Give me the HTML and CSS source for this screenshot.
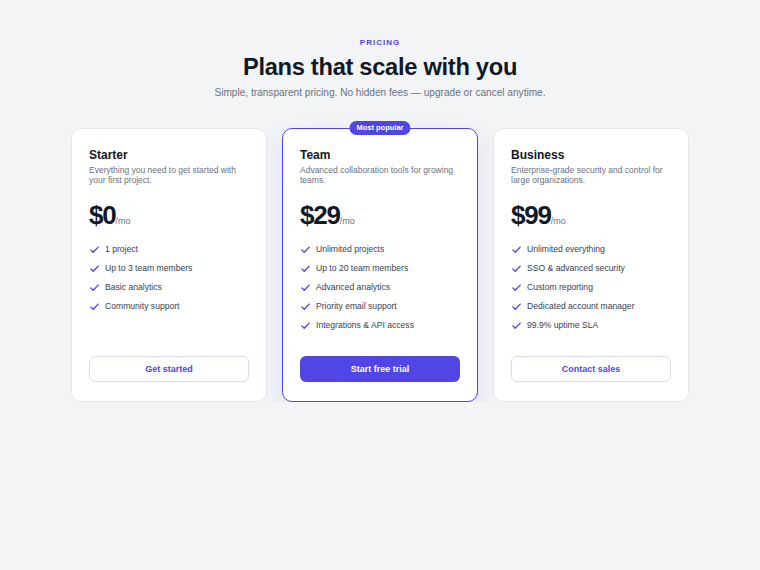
FILE: index.html
```html
<!DOCTYPE html>
<html lang="en">
<head>
<meta charset="utf-8">
<title>Pricing</title>
<link rel="stylesheet" href="styles.css">
</head>
<body>
<main class="pricing">
  <header class="pricing-head">
    <p class="eyebrow">Pricing</p>
    <h1 class="headline">Plans that scale with you</h1>
    <p class="lede">Simple, transparent pricing. No hidden fees — upgrade or cancel anytime.</p>
  </header>

  <section class="plans">
    <article class="plan">
      <h2 class="plan-name">Starter</h2>
      <p class="plan-desc">Everything you need to get started with your first project.</p>
      <p class="plan-price"><span class="amount">$0</span><span class="period">/mo</span></p>
      <ul class="features">
        <li><svg class="check" viewBox="0 0 12 12"><path d="M2 6.4 4.6 9 10 3.4"/></svg>1 project</li>
        <li><svg class="check" viewBox="0 0 12 12"><path d="M2 6.4 4.6 9 10 3.4"/></svg>Up to 3 team members</li>
        <li><svg class="check" viewBox="0 0 12 12"><path d="M2 6.4 4.6 9 10 3.4"/></svg>Basic analytics</li>
        <li><svg class="check" viewBox="0 0 12 12"><path d="M2 6.4 4.6 9 10 3.4"/></svg>Community support</li>
      </ul>
      <a class="btn btn-outline" href="#">Get started</a>
    </article>

    <article class="plan plan-featured">
      <span class="badge">Most popular</span>
      <h2 class="plan-name">Team</h2>
      <p class="plan-desc">Advanced collaboration tools for growing teams.</p>
      <p class="plan-price"><span class="amount">$29</span><span class="period">/mo</span></p>
      <ul class="features">
        <li><svg class="check" viewBox="0 0 12 12"><path d="M2 6.4 4.6 9 10 3.4"/></svg>Unlimited projects</li>
        <li><svg class="check" viewBox="0 0 12 12"><path d="M2 6.4 4.6 9 10 3.4"/></svg>Up to 20 team members</li>
        <li><svg class="check" viewBox="0 0 12 12"><path d="M2 6.4 4.6 9 10 3.4"/></svg>Advanced analytics</li>
        <li><svg class="check" viewBox="0 0 12 12"><path d="M2 6.4 4.6 9 10 3.4"/></svg>Priority email support</li>
        <li><svg class="check" viewBox="0 0 12 12"><path d="M2 6.4 4.6 9 10 3.4"/></svg>Integrations &amp; API access</li>
      </ul>
      <a class="btn btn-solid" href="#">Start free trial</a>
    </article>

    <article class="plan">
      <h2 class="plan-name">Business</h2>
      <p class="plan-desc">Enterprise-grade security and control for large organizations.</p>
      <p class="plan-price"><span class="amount">$99</span><span class="period">/mo</span></p>
      <ul class="features">
        <li><svg class="check" viewBox="0 0 12 12"><path d="M2 6.4 4.6 9 10 3.4"/></svg>Unlimited everything</li>
        <li><svg class="check" viewBox="0 0 12 12"><path d="M2 6.4 4.6 9 10 3.4"/></svg>SSO &amp; advanced security</li>
        <li><svg class="check" viewBox="0 0 12 12"><path d="M2 6.4 4.6 9 10 3.4"/></svg>Custom reporting</li>
        <li><svg class="check" viewBox="0 0 12 12"><path d="M2 6.4 4.6 9 10 3.4"/></svg>Dedicated account manager</li>
        <li><svg class="check" viewBox="0 0 12 12"><path d="M2 6.4 4.6 9 10 3.4"/></svg>99.9% uptime SLA</li>
      </ul>
      <a class="btn btn-outline" href="#">Contact sales</a>
    </article>
  </section>
</main>
</body>
</html>
```

FILE: styles.css
```css
* {
  box-sizing: border-box;
}

html,
body {
  margin: 0;
  padding: 0;
}

body {
  background: #f3f4f6;
  font-family: "Liberation Sans", Arial, sans-serif;
  color: #111827;
}

.pricing {
  width: 618px;
  margin: 0 auto;
  padding-top: 38px;
}

.pricing-head {
  text-align: center;
}

.eyebrow {
  margin: 0;
  font-size: 8px;
  line-height: 10px;
  font-weight: 700;
  letter-spacing: 1px;
  text-transform: uppercase;
  color: #4f46e5;
}

.headline {
  margin: 5px 0 0;
  font-size: 23.7px;
  line-height: 28px;
  font-weight: 700;
  letter-spacing: -0.3px;
  color: #111827;
}

.lede {
  margin: 5px 0 0;
  font-size: 10.1px;
  line-height: 14px;
  color: #6b7280;
}

.plans {
  margin-top: 28px;
  display: grid;
  grid-template-columns: repeat(3, 1fr);
  gap: 15px;
}

.plan {
  position: relative;
  display: flex;
  flex-direction: column;
  height: 274px;
  padding: 18px 17px 19px;
  background: #ffffff;
  border: 1px solid #e5e7eb;
  border-radius: 10px;
}

.plan-featured {
  border: 1.5px solid #4f46e5;
  box-shadow: 0 10px 24px rgba(79, 70, 229, 0.12);
}

.badge {
  position: absolute;
  top: -8px;
  left: 50%;
  transform: translateX(-50%);
  padding: 0 7px;
  height: 14px;
  line-height: 14px;
  border-radius: 7px;
  background: #4f46e5;
  color: #ffffff;
  font-size: 7.5px;
  font-weight: 700;
  white-space: nowrap;
}

.plan-name {
  margin: 0;
  font-size: 12px;
  line-height: 16px;
  font-weight: 700;
  color: #111827;
}

.plan-desc {
  margin: 2px 0 0;
  font-size: 8.5px;
  line-height: 10px;
  color: #6b7280;
}

.plan-price {
  margin: 15px 0 0;
  display: flex;
  align-items: baseline;
}

.amount {
  font-size: 26px;
  line-height: 30px;
  font-weight: 700;
  letter-spacing: -1.2px;
  color: #111827;
}

.period {
  font-size: 9px;
  color: #6b7280;
}

.features {
  list-style: none;
  margin: 9px 0 0;
  padding: 0;
  flex: 1;
}

.features li {
  display: flex;
  align-items: center;
  height: 19px;
  font-size: 8.6px;
  color: #374151;
}

.check {
  width: 11px;
  height: 11px;
  margin: 2px 5px 0 0;
  flex: none;
  fill: none;
  stroke: #4f46e5;
  stroke-width: 1.5;
  stroke-linecap: round;
  stroke-linejoin: round;
}

.btn {
  display: flex;
  align-items: center;
  justify-content: center;
  height: 26px;
  border-radius: 6px;
  font-size: 9px;
  font-weight: 700;
  text-decoration: none;
}

.btn-outline {
  border: 1px solid #d9dcef;
  color: #4f46e5;
  background: #ffffff;
}

.btn-solid {
  background: #4f46e5;
  color: #ffffff;
}
```
